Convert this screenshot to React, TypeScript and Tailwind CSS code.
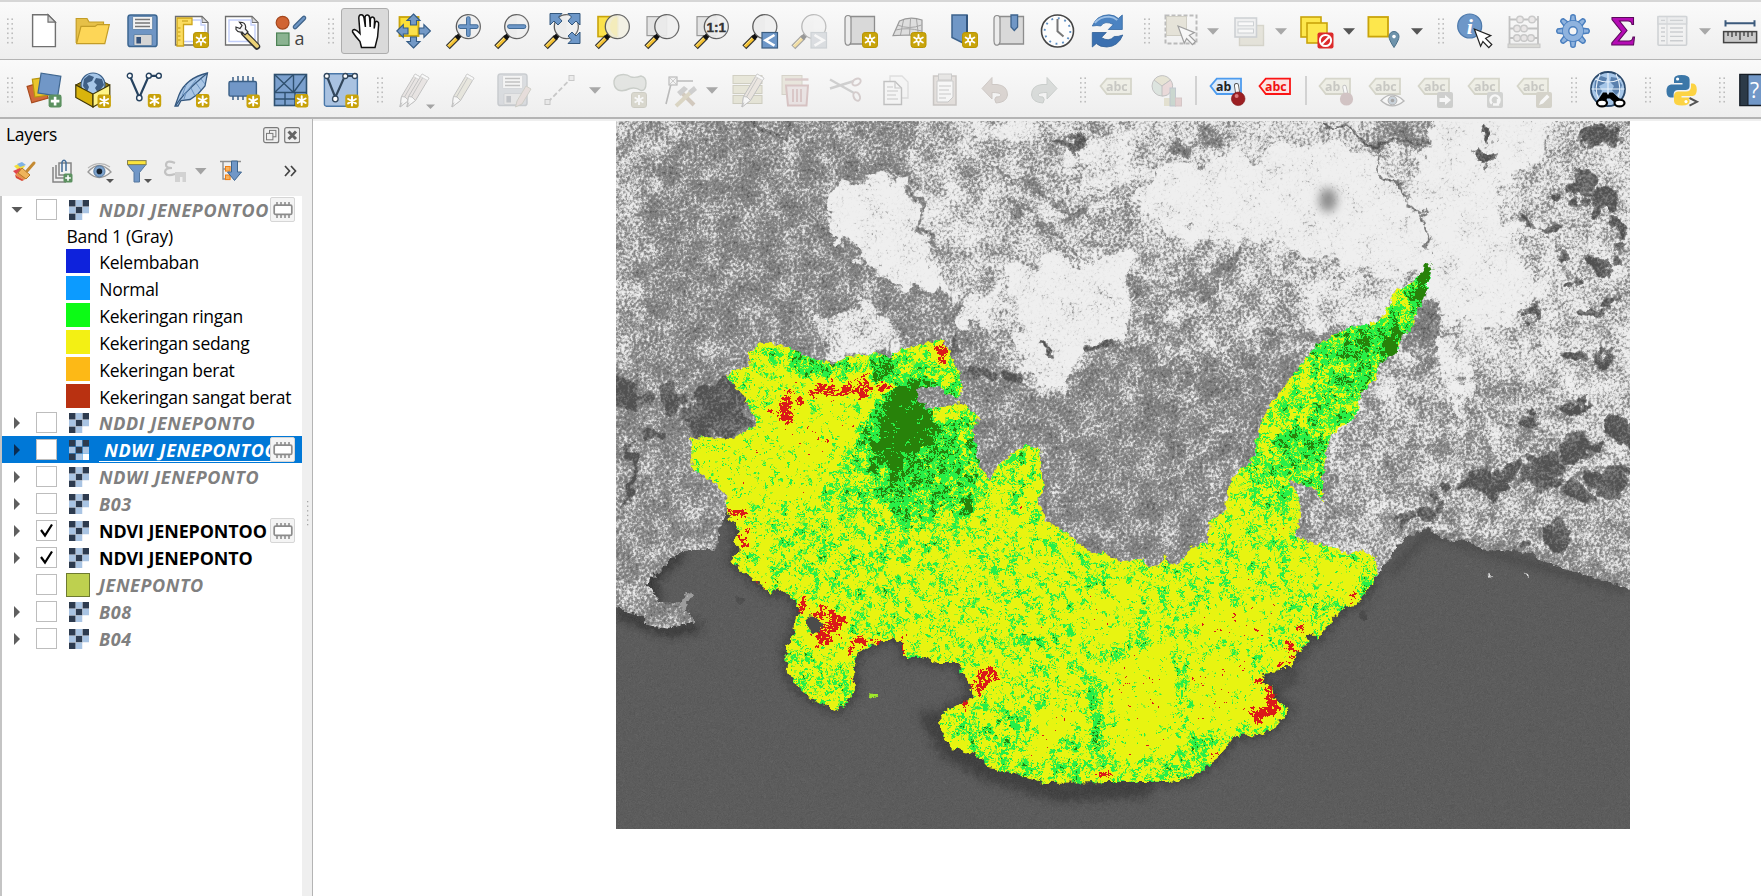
import React from "react";

type Kids = { children?: React.ReactNode };

/* ---------- toolbar primitives ---------- */

function Icon({ children, faded = false }: Kids & { faded?: boolean }) {
  return (
    <div className="flex w-[49.4px] flex-none items-center justify-center">
      <svg
        width="36"
        height="36"
        viewBox="0 0 36 36"
        fill="none"
        className={faded ? "flex-none overflow-visible opacity-40" : "flex-none overflow-visible"}
      >
        {children}
      </svg>
    </div>
  );
}

function Handle({ className = "w-[24.4px]" }: { className?: string }) {
  return (
    <div className={"flex flex-none items-center justify-end pr-[5px] " + className}>
      <svg width="7" height="26" viewBox="0 0 7 26">
        {[0, 1, 2, 3, 4, 5].map((i) => (
          <g key={i} fill="#bcbcbc">
            <rect x="0" y={i * 4.7 + 0.4} width="1.6" height="1.6" />
            <rect x="4.4" y={i * 4.7 + 0.4} width="1.6" height="1.6" />
          </g>
        ))}
      </svg>
    </div>
  );
}

function Arrow({ dark = false }: { dark?: boolean }) {
  return (
    <div className="flex w-[18.6px] flex-none items-center justify-center pr-[3px]">
      <svg width="12" height="7" viewBox="0 0 12 7">
        <path d="M0 .3H12L6 6.7Z" fill={dark ? "#555" : "#a8a8a8"} />
      </svg>
    </div>
  );
}

function Sep() {
  return (
    <div className="flex w-[11px] flex-none items-center justify-center">
      <div className="h-[29px] w-[2px] bg-[#d2d2d2]" />
    </div>
  );
}

function Badge({ x = 19, y = 19 }: { x?: number; y?: number }) {
  return (
    <g transform={`translate(${x} ${y})`}>
      <rect x=".5" y=".5" width="15" height="15" rx="2.6" fill="#c9a40a" stroke="#b89504" />
      <g stroke="#fff" strokeWidth="1.8" strokeLinecap="round">
        <path d="M8 3V13M3.6 5.5L12.4 10.5M12.4 5.5L3.6 10.5" />
      </g>
      <circle cx="8" cy="8" r="2.7" fill="#fff" />
      <circle cx="8" cy="8" r="1.2" fill="#c9a40a" />
    </g>
  );
}

function Flake({ x = 22, y = 22 }: { x?: number; y?: number }) {
  return (
    <g transform={`translate(${x} ${y})`}>
      <rect width="13.4" height="13.4" rx="2.4" fill="#c8a20a" />
      <path d="M6.7 2.3V11.1M2.8 4.5L10.6 8.9M10.6 4.5L2.8 8.9" stroke="#fff" strokeWidth="2" strokeLinecap="round" />
    </g>
  );
}

function Mag({ dx = 0, lens = "#ebebeb" }: { dx?: number; lens?: string }) {
  return (
    <g transform={`translate(${dx} 0)`}>
      <path d="M1.8 34.2L12 24" stroke="#333" strokeWidth="5.6" />
      <path d="M2.4 33.6L10.5 25.5" stroke="#f5c231" strokeWidth="3.2" />
      <path d="M1.8 32.8L10 24.6" stroke="#fbe28a" strokeWidth="1" />
      <path d="M10.6 25.4L14.4 21.6" stroke="#111" strokeWidth="4.8" />
      <circle cx="22.3" cy="13.6" r="12" fill={lens} fillOpacity=".93" stroke="#5c5c5c" strokeWidth="1.3" />
      <path d="M22.3 1.6A12 12 0 0 1 22.3 25.6" fill="#fff" opacity=".22" />
    </g>
  );
}

function Page() {
  return (
    <g>
      <path d="M1.5 3.5H28L34 9.5V32H1.5Z" fill="#fff" stroke="#6e6e6e" strokeWidth="1.3" />
      <path d="M28 3.5V9.5H34Z" fill="#d9d9d9" stroke="#6e6e6e" />
      <path d="M5 7H27V12H31V28.5H5Z" stroke="#c3cffa" strokeWidth="1.4" />
    </g>
  );
}

function Cursor({ x, y }: { x: number; y: number }) {
  return (
    <path
      transform={`translate(${x} ${y})`}
      d="M0 0L16.5 6.6L11.3 9.3L17.5 15.5L14.5 18.6L8.6 12.5L6.3 17.3Z"
      fill="#fff"
      stroke="#222"
      strokeWidth="1.2"
    />
  );
}

function Tag({ text = "abc", fill = "#e4e4cf", stroke = "#a8a88c", ink = "#86867a" }: { text?: string; fill?: string; stroke?: string; ink?: string }) {
  return (
    <g transform="translate(-1 0)">
      <path d="M2.5 14L8.8 6.6H33V22H8.8Z" fill={fill} stroke={stroke} strokeWidth="1.8" />
      <text x="8" y="18.6" fontSize="12.4" fontWeight="700" fill={ink} fontFamily="'Open Sans','Noto Sans',sans-serif">
        {text}
      </text>
    </g>
  );
}

function Floppy({ body = "#6f95c4", edge = "#3c6690", slot = "#35527a" }: { body?: string; edge?: string; slot?: string }) {
  return (
    <g>
      <rect x="3" y="2" width="29" height="31.5" rx="2.6" fill={body} stroke={edge} strokeWidth="1.5" />
      <rect x="7.6" y="3.5" width="20" height="13" rx="1" fill="#f3f3f3" stroke={edge} strokeWidth=".6" />
      <path d="M10 6.5H25M10 10H25M10 13.5H25" stroke="#777" strokeWidth="1.4" />
      <rect x="9" y="21.5" width="18" height="11" rx="1" fill="#d5d5d5" stroke={edge} strokeWidth=".6" />
      <rect x="11.4" y="24" width="4.6" height="6.5" fill={slot} />
    </g>
  );
}

function Pencil({ x = 0, fill = "#d5d2bd" }: { x?: number; fill?: string }) {
  return (
    <g transform={`translate(${x} 0)`}>
      <path d="M6 35L7.5 24.5L21 2L28 6L14.5 28.5Z" fill={fill} stroke="#777" strokeWidth="1" />
      <path d="M7.5 24.5L11 25L14.5 28.5L6 35Z" fill="#fff" stroke="#777" strokeWidth=".9" />
      <path d="M10.5 25L23 3.5M6 35L8 30.5" stroke="#777" strokeWidth=".9" />
      <path d="M19.5 4.5L26.5 8.5L28 6L21 2Z" fill="#fff" stroke="#999" strokeWidth=".8" />
    </g>
  );
}

function Scroll() {
  return (
    <g>
      <path d="M7 3.5H32.5V31H7Z" fill="#d9d9d9" stroke="#8d8d8d" strokeWidth="1.3" />
      <path d="M9 3V29Q8 33 4.5 32Q3 31 3 28V6Q3 2.5 6 2.5Q9 2.5 9 6" fill="#ececec" stroke="#8d8d8d" strokeWidth="1.2" />
    </g>
  );
}

/* ---------- toolbars ---------- */

function MainBar() {
  return (
    <div className="flex h-[57px] flex-none overflow-hidden border-b border-[#b4b4b4] bg-linear-to-b from-[#fafafa] to-[#eeeeee]">
      <Handle className="w-[19.3px]" />
      <Icon>
        <path d="M6.6 1.8H22L29.4 9.2V33.6H6.6Z" fill="#fff" stroke="#707070" strokeWidth="1.4" />
        <path d="M22 1.8V9.2H29.4Z" fill="#d4d4d4" stroke="#707070" strokeWidth="1.2" />
      </Icon>
      <Icon>
        <path d="M1.2 5.5H12L14 9H28.5V14H6.5L2.5 29.5H1.2Z" fill="#e6c048" stroke="#c39d27" strokeWidth="1.2" />
        <path d="M6 13.4H20L22.5 11.6H34.3L29.8 30.6H1.6Z" fill="#fdd657" stroke="#c39d27" strokeWidth="1.2" />
      </Icon>
      <Icon>
        <Floppy />
      </Icon>
      <Icon>
        <Page />
        <path d="M3 5H18V11.5H9.5V33H3Z" fill="#fbdc5f" stroke="#cda51a" strokeWidth="1.3" />
        <path d="M4 15H6.5M4 19H6.5M4 23H6.5M4 27H6.5M8 8H14" stroke="#c49a10" strokeWidth="1.2" />
        <Badge />
      </Icon>
      <Icon>
        <Page />
        <path d="M20 20L33 33.5" stroke="#333" strokeWidth="6.4" strokeLinecap="round" />
        <path d="M21 21L33 33" stroke="#ecd277" strokeWidth="3.8" strokeLinecap="round" />
        <path
          d="M12 16.5Q14 20 18 19L21 22L24 19L21.4 16Q22.5 11 18.5 9.5L15.5 9.2L18 12.5L16 15.5L12 14Z"
          fill="#f5f5f5"
          stroke="#333"
          strokeWidth="1.2"
        />
      </Icon>
      <Icon>
        <circle cx="9.6" cy="9.7" r="6.4" fill="#d06433" stroke="#a5471d" strokeWidth="1.2" />
        <path d="M22 14L31 5" stroke="#3f6389" strokeWidth="4.6" strokeLinecap="round" />
        <path d="M22 14L31 5" stroke="#6d95c4" strokeWidth="2.4" strokeLinecap="round" />
        <rect x="3.6" y="20" width="12.4" height="12.4" fill="#8bb391" stroke="#4d8255" strokeWidth="1.2" />
        <text x="21.5" y="31.5" fontSize="18" fill="#444" fontFamily="'Open Sans','Noto Sans',sans-serif">a</text>
      </Icon>
      <Handle className="w-[24.6px]" />
      <div className="flex w-[49.4px] flex-none items-center justify-center">
        <div className="flex h-[46px] w-[48px] items-center justify-center rounded-[3px] border border-[#adadad] bg-[#dadada]">
          <svg width="36" height="36" viewBox="0 0 36 36">
            <path
              d="M14.5 34.5L13 28.5Q8 23 5.6 19Q5 16.6 7.6 16.4Q10 17 13 20.5L11.8 5Q12 1.6 14 1.8Q16.6 1.6 17 5L18.4 14L18 4Q18.6 1.6 20.6 2Q22.6 2.4 22.6 5L23.2 14L23.4 6Q24 3.6 25.6 4Q27.6 4.4 27.6 7L27.2 15.5L28.2 9.5Q29 7.8 30.6 8.6Q32 9.4 31.6 12L30.6 24L28 34.5Z"
              fill="#fff"
              stroke="#111"
              strokeWidth="1.5"
            />
          </svg>
        </div>
      </div>
      <Icon>
        <rect x="3.5" y="4" width="19" height="19" fill="#fbdf36" stroke="#c9a40a" strokeWidth="1.8" />
        <g fill="#7399c6" stroke="#355c86" strokeWidth="1.1">
          <path d="M17.5 1L24 7.5H20.5V12H14.5V7.5H11Z" />
          <path d="M17.5 35L24 28.5H20.5V24H14.5V28.5H11Z" />
          <path d="M.8 18L7.3 11.5V15H12V21H7.3V24.5Z" />
          <path d="M34.4 18L27.9 11.5V15H23.2V21H27.9V24.5Z" />
        </g>
        <rect x="14" y="14.5" width="7" height="7" fill="#fbe04c" />
      </Icon>
      <Icon>
        <Mag />
        <path d="M22.3 5.5V21.7M14.2 13.6H30.4" stroke="#3f6a97" strokeWidth="4.6" strokeLinecap="round" />
        <path d="M22.3 5.5V21.7M14.2 13.6H30.4" stroke="#6d97c8" strokeWidth="2.8" strokeLinecap="round" />
      </Icon>
      <Icon>
        <g transform="translate(-.6 0)">
          <Mag />
          <path d="M15 13.6H29.6" stroke="#3f6a97" strokeWidth="4.6" strokeLinecap="round" />
          <path d="M15 13.6H29.6" stroke="#6d97c8" strokeWidth="2.8" strokeLinecap="round" />
        </g>
      </Icon>
      <Icon>
        <Mag />
        <g fill="#6d97c8" stroke="#34587e" strokeWidth="1">
          <path d="M6 .5H18L14.5 4L18 8L14 12L10 8L6 12Z" />
          <path d="M36 .5H24L27.5 4L24 8L28 12L32 8L36 12Z" />
          <path d="M36 30.5H24L27.5 27L24 23L28 19L32 23L36 19Z" />
        </g>
      </Icon>
      <Icon>
        <rect x="4" y="3.6" width="20" height="20" fill="#fbe24b" stroke="#c9a40a" strokeWidth="1.6" />
        <Mag dx={1} lens="#efeddc" />
        <path d="M23.3 4A10 10 0 0 0 23.3 23.3Z" fill="#f7ecac" opacity=".6" />
      </Icon>
      <Icon>
        <rect x="4" y="3.6" width="20" height="19" fill="#e3e3e3" stroke="#999" strokeWidth="1.2" />
        <Mag dx={1.5} />
      </Icon>
      <Icon>
        <rect x="4" y="3.6" width="20" height="19" fill="#e3e3e3" stroke="#999" strokeWidth="1.2" />
        <Mag dx={1} />
        <text x="23.3" y="18.6" textAnchor="middle" fontSize="13.5" fontWeight="700" fill="#333" stroke="#333" strokeWidth=".4" fontFamily="'Liberation Sans',sans-serif">1:1</text>
      </Icon>
      <Icon>
        <Mag dx={0.5} />
        <rect x="20" y="19.5" width="15.5" height="15.5" fill="#6d97c8" stroke="#3b5d80" strokeWidth="1.2" />
        <path d="M32.5 22L23.5 27.3L32.5 32.6" stroke="#fff" strokeWidth="2.6" />
      </Icon>
      <Icon faded>
        <Mag dx={0.5} />
        <rect x="20" y="19.5" width="15.5" height="15.5" fill="#b9c0c8" stroke="#98a2ab" strokeWidth="1.2" />
        <path d="M23.5 22L32.5 27.3L23.5 32.6" stroke="#fff" strokeWidth="2.6" />
      </Icon>
      <Icon>
        <g transform="translate(1 0)">
          <Scroll />
          <Badge x={20} />
        </g>
      </Icon>
      <Icon>
        <g transform="translate(1.5 0)">
          <path d="M8 8Q18 3 30.5 7V24L18 22L1.5 22.5Z" fill="#dedede" stroke="#999" strokeWidth="1.2" />
          <path d="M12 7L9 22M19 6L18 22M25 6L27 23M6 12Q18 17 30 12M4 17Q16 14 30 18" stroke="#a5a5a5" />
          <Badge />
        </g>
      </Icon>
      <Icon>
        <path d="M12 2H27V29.5H22L12 24.5Z" fill="#7097c6" stroke="#3d638d" strokeWidth="1.5" />
        <path d="M27 2V29.5" stroke="#32557e" strokeWidth="2" />
        <Badge x={22} />
      </Icon>
      <Icon>
        <g transform="translate(2 0)">
          <Scroll />
          <path d="M20 2H26.6V14L23.3 17.5L20 14Z" fill="#7097c6" stroke="#3d638d" strokeWidth="1.3" />
        </g>
      </Icon>
      <Icon>
        <circle cx="19.5" cy="18" r="16" fill="#fdfdfd" stroke="#454545" strokeWidth="1.6" />
        <circle cx="19.5" cy="18" r="12.8" stroke="#5f8fc2" strokeWidth="1.9" strokeDasharray="1.9 4.8" />
        <path d="M19.5 6V18.3L25.5 23.5" stroke="#777" strokeWidth="2" />
      </Icon>
      <Icon>
        <g transform="translate(.8 0)">
          <path d="M3.5 13Q8 2 20 1.8Q26 2 29.5 5.5L33.5 2V16.5H19.5L24.5 11.5Q16 7 12 13Q8.5 12 3.5 13Z" fill="#4b83c2" stroke="#356aa5" strokeWidth=".8" />
          <path d="M34 22Q29.5 33.5 18 34Q11 34 7.5 30.5L3.5 34V19.5H17.5L12.6 24.5Q20 29.5 25.5 23.5Q29 24 34 22Z" fill="#3b70b0" stroke="#2f5e96" strokeWidth=".8" />
          <path d="M6 10Q11 3.6 20 3.6Q25 4 28.5 7" stroke="#9dc0e6" strokeWidth="1.8" />
        </g>
      </Icon>
      <Handle className="w-[25.6px]" />
      <Icon faded>
        <rect x="2.5" y="2.5" width="31" height="28" stroke="#666" strokeWidth="2" strokeDasharray="4 2" />
        <rect x="3.5" y="3.5" width="20" height="19" fill="#cfc9b0" stroke="#9b967d" />
        <Cursor x={15} y={13} />
      </Icon>
      <Arrow />
      <Icon faded>
        <rect x="8.5" y="12.5" width="24" height="20" fill="#d0ccb6" stroke="#aaa78f" strokeWidth="1.4" />
        <rect x="4" y="5" width="21.5" height="19" fill="#e5e7e8" stroke="#949ca3" strokeWidth="1.6" />
        <rect x="7" y="8.8" width="15.5" height="4" fill="#fff" stroke="#949ca3" />
        <rect x="7" y="16" width="15.5" height="4" fill="#fff" stroke="#949ca3" />
      </Icon>
      <Arrow />
      <Icon>
        <rect x="2" y="4" width="20" height="20" fill="#fde74c" stroke="#c9a40a" strokeWidth="1.6" />
        <rect x="8" y="10" width="20" height="20" fill="#fde74c" stroke="#c9a40a" strokeWidth="1.6" />
        <rect x="18.5" y="19.5" width="16" height="16" rx="2" fill="#dc2a2a" />
        <circle cx="26.5" cy="27.5" r="5.6" stroke="#fff" strokeWidth="2" />
        <path d="M22.7 31.3L30.3 23.7" stroke="#fff" strokeWidth="2" />
      </Icon>
      <Arrow dark />
      <Icon>
        <rect x="1.4" y="4" width="19.6" height="19.6" fill="#fde74c" stroke="#c9a40a" strokeWidth="1.8" />
        <path d="M27 34.5Q22 27 22 23.5A5 5 0 0 1 32 23.5Q32 27 27 34.5Z" fill="#6e93ab" stroke="#4a7089" />
        <circle cx="27" cy="23.6" r="1.8" fill="#fff" />
      </Icon>
      <Arrow dark />
      <Handle className="w-[22px]" />
      <Icon>
        <circle cx="12.7" cy="13" r="12" fill="#6d97c8" stroke="#4d79ab" strokeWidth="1.2" />
        <text x="12.9" y="20.5" textAnchor="middle" fontSize="22" fontWeight="700" fontStyle="italic" fill="#fff" fontFamily="'Liberation Serif',serif">i</text>
        <Cursor x={17.3} y={16} />
      </Icon>
      <Icon faded>
        <path d="M3.5 3V31M32 3V31M3.5 6.5H32M3.5 15.5H32M3.5 25H32" stroke="#777" strokeWidth="1.8" />
        <rect x="2" y="31" width="32" height="3.6" fill="#b9b9b0" stroke="#888" />
        <g fill="#d9d2d2" stroke="#888" strokeWidth="1.4">
          <circle cx="14" cy="6.5" r="3.3" /><circle cx="26" cy="6.5" r="3.3" />
          <circle cx="11" cy="15.5" r="3.3" /><circle cx="18" cy="15.5" r="3.3" />
          <circle cx="11" cy="25" r="3.3" /><circle cx="18" cy="25" r="3.3" /><circle cx="25" cy="25" r="3.3" />
        </g>
      </Icon>
      <Icon>
        <g fill="#8fb3de" stroke="#4a7fbf" strokeWidth="1.4">
          {[0, 45, 90, 135, 180, 225, 270, 315].map((a) => (
            <path key={a} d="M15.2 8.5L16 2.6Q18 .8 20 2.6L20.8 8.5" transform={`rotate(${a} 18 18)`} />
          ))}
          <circle cx="18" cy="18" r="10.2" />
          <circle cx="18" cy="18" r="4.2" fill="#f5f5f5" />
        </g>
        <circle cx="18" cy="18" r="9.4" stroke="#8fb3de" strokeWidth="1.6" />
      </Icon>
      <Icon>
        <path
          d="M7 4.5H28.5V11.5H27Q26.5 8 23 8H14.5L22 17.5L13.5 28H24Q27.5 28 28 24H29.5L28.5 32H6.8V30L16.5 18.5L7 6.5Z"
          fill="#b50cb5"
          stroke="#5b0a5b"
          strokeWidth="1.1"
        />
      </Icon>
      <Icon faded>
        <rect x="4" y="3.6" width="28.6" height="28.6" rx="1" fill="#f0f0f0" stroke="#9ba2a8" strokeWidth="1.6" />
        <rect x="4" y="3.6" width="28.6" height="7.4" fill="#dcdfe2" stroke="#9ba2a8" strokeWidth="1.4" />
        <path d="M13 4V32" stroke="#a9afb5" strokeWidth="1.2" />
        <path d="M7 7.4H11M16 7.4H29M7 15H11M16 15H29M7 19H11M16 19H29M7 23.4H11M16 23.4H29M7 27.8H11M16 27.8H29" stroke="#92989e" strokeWidth="1.4" />
      </Icon>
      <Arrow />
      <Icon>
        <path d="M3.5 10.3H32.5M3.5 7.2V13.4M32.5 7.2V13.4" stroke="#3c5a7c" strokeWidth="2" />
        <rect x="1.6" y="18.6" width="33" height="11" fill="#c9c9c9" stroke="#444" strokeWidth="1.5" />
        <path d="M6 19V23M10 19V24M14 19V23M18 19V27M22 19V23M26 19V24M30 19V23" stroke="#444" strokeWidth="1.4" />
      </Icon>
    </div>
  );
}

function Globe({ cx, cy, r }: { cx: number; cy: number; r: number }) {
  return (
    <g transform={`translate(${cx} ${cy}) scale(${r / 12})`}>
      <circle r="12" fill="#a6c6e8" stroke="#3a5f88" strokeWidth="1.2" />
      <path d="M-9 -6L-4 -10L1 -8L-1 -4L-6 -2L-4 2L-6 7L-10 1ZM3 -7L9 -6L11 0L8 4L5 8L2 3L4 0L1 -3Z" fill="#3f5f85" />
    </g>
  );
}

function EditBar() {
  return (
    <div className="flex h-[59px] flex-none overflow-hidden border-b-2 border-[#b4b4b4] bg-linear-to-b from-[#fafafa] to-[#eeeeee] pt-[3px]">
      <Handle className="w-[19.3px]" />
      <Icon>
        <g strokeWidth="1.2">
          <rect x="3" y="12" width="17" height="17" fill="#d2693b" stroke="#a84b1e" transform="rotate(-16 11 20)" />
          <rect x="7.5" y="6" width="18" height="18" fill="#eac52c" stroke="#b8950e" transform="rotate(-8 16 15)" />
          <rect x="13.5" y="2.5" width="20" height="20" fill="#7197c7" stroke="#3f668f" transform="rotate(9 23 12)" />
        </g>
        <rect x="22.6" y="22.6" width="13" height="13" rx="2.4" fill="#5c9160" />
        <path d="M29.1 24.8V33.4M24.8 29.1H33.4" stroke="#fff" strokeWidth="2.6" />
      </Icon>
      <Icon>
        <path d="M.8 13L17.5 4L34.8 13L18 22Z" fill="#96790a" stroke="#3f3606" />
        <Globe cx={18} cy={13} r={12} />
        <path d="M.8 13L18 22V35L.8 25.5Z" fill="#d9b40c" stroke="#3f3606" strokeWidth="1.2" />
        <path d="M34.8 13L18 22V35L34.8 25.5Z" fill="#fdf388" stroke="#3f3606" strokeWidth="1.2" />
        <Flake x={22.5} y={22.5} />
      </Icon>
      <Icon>
        <g transform="translate(.8 0)">
          <path d="M4 3.8L13.500 25.500L23 3.800H33" stroke="#26425f" strokeWidth="2.200" />
          <g fill="#fff" stroke="#26425f" strokeWidth="1.4">
            <circle cx="4" cy="3.8" r="2.500" /><circle cx="23" cy="3.8" r="2.500" /><circle cx="33" cy="3.8" r="2.500" /><circle cx="13.5" cy="26" r="2.700" />
          </g>
          <Flake />
        </g>
      </Icon>
      <Icon>
        <path d="M33.5 1L31 14L24 22L16 27.5L7 28.5L4 34H1L5 23Q12 6 33.5 1Z" fill="#a9c6e6" stroke="#35587f" strokeWidth="1.3" />
        <path d="M1.5 34Q10 20 33.5 1" stroke="#35587f" strokeWidth="1.3" />
        <path d="M12 21L10 27M17 16L21 24M22 11L27 18M27 7L31 12M10 23L22 8M8 24L12 13" stroke="#6b93c0" />
        <Flake x={22} y={22} />
      </Icon>
      <Icon>
        <path d="M9 5V28M14 4V28M19 4V28M24 4V28M29 5V28" stroke="#3b5f86" strokeWidth="1.5" />
        <rect x="5" y="9.5" width="27.4" height="14.6" rx="1.4" fill="#7197c7" stroke="#3b5f86" strokeWidth="1.4" />
        <Flake x={22.5} y={22.5} />
      </Icon>
      <Icon>
        <rect x="1.5" y="2.5" width="32" height="31" fill="#7ba0ce" stroke="#2f506f" strokeWidth="1.6" />
        <path d="M1.5 20.5H33.5M20.5 2.5V20.5M1.5 2.5L20.5 20.5M20.5 2.5L1.5 20.5M20.5 20.5L33.5 2.5M12 20.5V33.5M1.5 27H22M22 20.5V33.5" stroke="#2f506f" strokeWidth="1.4" />
        <Flake x={22} y={22} />
      </Icon>
      <Icon>
        <g transform="translate(.8 0)">
          <rect x="1.6" y="1.8" width="33" height="32.4" rx="2" fill="#a9c2e1" stroke="#4a77a8" strokeWidth="1.4" />
          <path d="M4 4L12.5 25.5L22 4H32" stroke="#33475c" strokeWidth="2.2" />
          <g fill="#fff" stroke="#33475c" strokeWidth="1.3">
            <circle cx="4" cy="4" r="2.5" /><circle cx="22.5" cy="4" r="2.5" /><circle cx="32" cy="4" r="2.5" /><circle cx="12.5" cy="27" r="2.8" />
          </g>
          <Flake x={22.5} y={22.5} />
        </g>
      </Icon>
      <Handle className="w-[24.4px]" />
      <Icon faded>
        <Pencil x={-2} fill="#d7cdc9" />
        <Pencil x={5} fill="#d7cdc9" />
        <path d="M30 32.5H39L34.5 37Z" fill="#333" />
      </Icon>
      <Icon faded>
        <Pencil x={0} />
      </Icon>
      <Icon faded>
        <Floppy body="#b4bac2" edge="#8b929b" slot="#7b828c" />
        <path d="M20.5 35L22 29L31 14L36 17L27 32Z" fill="#d5beb8" stroke="#998" />
      </Icon>
      <Icon faded>
        <path d="M4 30L28 5.5" stroke="#888" strokeWidth="1.8" strokeDasharray="5 2.6" />
        <rect x="1" y="27.5" width="5" height="5" fill="#ddd" stroke="#888" />
        <rect x="25" y="3.5" width="5" height="5" fill="#ddd" stroke="#888" />
      </Icon>
      <Arrow />
      <Icon faded>
        <path d="M8 3Q14 1.5 19 5Q24 6 29 4Q34 5 34 11Q34 19 29 18.5Q24 15 18 16.5Q11 20 6 18Q1.5 15 2 9Q3 4 8 3Z" fill="#c9cdc6" stroke="#8b9489" strokeWidth="1.4" />
        <rect x="19.5" y="20.5" width="15" height="15" rx="2.4" fill="#b5b199" stroke="#999680" />
        <path d="M27 23V33M22.6 25.5L31.4 30.5M31.4 25.5L22.6 30.5" stroke="#fff" strokeWidth="1.9" />
      </Icon>
      <Icon faded>
        <path d="M9 12L4 32M10 9H31" stroke="#666" strokeWidth="1.6" />
        <rect x="7" y="5" width="8" height="8" fill="#eee" stroke="#666" strokeWidth="1.2" />
        <path d="M7 5L15 13M15 5L7 13" stroke="#777" strokeWidth=".8" />
        <path d="M18 19L32 33" stroke="#a48f74" strokeWidth="4" />
        <path d="M15 20L22 14L26 17L18.5 24ZM32 14L35 18L29 23L26 19Z" fill="#999" />
        <path d="M14 34L28 21" stroke="#b9ac81" strokeWidth="4" />
      </Icon>
      <Arrow />
      <Icon faded>
        <g fill="#d3d0ae" stroke="#999676">
          <rect x="3" y="3.5" width="29" height="8" /><rect x="3" y="13.5" width="29" height="8" /><rect x="3" y="23.5" width="29" height="8" />
        </g>
        <Pencil x={6} fill="#dccfc2" />
      </Icon>
      <Icon faded>
        <rect x="3" y="3.5" width="20" height="19" fill="#d5cfb8" stroke="#a5a088" />
        <path d="M6 7.5H29.5" stroke="#b58c8c" strokeWidth="2.4" />
        <path d="M7 13.5H29L27.5 33.5H9Z" fill="#dccdcd" stroke="#b08080" strokeWidth="2" />
        <path d="M14 17V30M18 17V30M22 17V30" stroke="#b08080" strokeWidth="1.8" />
      </Icon>
      <Icon faded>
        <path d="M2 7.5L26 21M2 16.5L26 9" stroke="#999" strokeWidth="2.4" />
        <ellipse cx="28.5" cy="10" rx="4.5" ry="3" stroke="#a89494" strokeWidth="2" transform="rotate(-30 28.5 10)" />
        <ellipse cx="28.5" cy="24.5" rx="3" ry="4.5" stroke="#a89494" strokeWidth="2" transform="rotate(-25 28.5 24)" />
      </Icon>
      <Icon faded>
        <path d="M12 4H24L30 10V26H12Z" fill="#f4f4f4" stroke="#bbb" strokeWidth="1.3" />
        <path d="M6 9.5H17L23.5 16V32.5H6Z" fill="#f7f7f7" stroke="#777" strokeWidth="1.4" />
        <path d="M17 9.5V16H23.5M9 15H15M9 19H20M9 23H18M9 27H20" stroke="#8a8a8a" strokeWidth="1.2" />
      </Icon>
      <Icon faded>
        <rect x="6.5" y="4" width="22.5" height="29" fill="#cdc3bc" stroke="#8d857f" strokeWidth="1.5" />
        <path d="M10 9H26V25L21 30H10Z" fill="#fafafa" stroke="#8d8d8d" />
        <rect x="11.5" y="2" width="13" height="6" fill="#d0cdca" stroke="#8d8d8d" />
        <path d="M12 14H24M12 18H22M12 22H24M12 26H19" stroke="#8a8a8a" strokeWidth="1.2" />
      </Icon>
      <Icon faded>
        <path d="M5 16.5L15 5.5V12.5H20Q30.5 13.5 30.5 23Q29.5 30.5 19 31Q16.5 27 19 25Q24 25 23.6 22.5Q23 20.5 15 20.5V27Z" fill="#b5a79f" stroke="#94877f" />
      </Icon>
      <Icon faded>
        <path d="M31 16.5L21 5.5V12.5H16Q5.5 13.5 5.5 23Q6.5 30.5 17 31Q19.5 27 17 25Q12 25 12.4 22.5Q13 20.5 21 20.5V27Z" fill="#b1b8b4" stroke="#8c9590" />
      </Icon>
      <Handle className="w-[23.4px]" />
      <Icon faded>
        <Tag />
      </Icon>
      <Icon faded>
        <circle cx="14" cy="14" r="10" fill="#bacdc0" stroke="#777" />
        <path d="M14 14L6 8A10 10 0 0 1 22.5 8Z" fill="#d0caa4" stroke="#777" />
        <path d="M14 14L22.5 8A10 10 0 0 1 14 24Z" fill="#dbb3b3" stroke="#777" />
        <rect x="16" y="26" width="6" height="8" fill="#cfc9a0" /><rect x="22" y="16" width="5.5" height="18" fill="#8fae9c" stroke="#789" />
        <rect x="27.5" y="26" width="6" height="8" fill="#cfa0a0" stroke="#a88" />
      </Icon>
      <Sep />
      <Icon>
        <Tag text="ab" fill="#dbeafa" stroke="#4d9bee" ink="#222" />
        <path d="M27.5 13.5L29 24" stroke="#555" strokeWidth="5" strokeLinecap="round" />
        <path d="M27.5 13.5L29 24" stroke="#fafafa" strokeWidth="3.2" strokeLinecap="round" />
        <circle cx="29.2" cy="26.8" r="6.8" fill="#9c1f22" stroke="#7c1113" strokeWidth=".6" />
        <circle cx="27.6" cy="24" r="2" fill="#dc7c7c" />
      </Icon>
      <Icon>
        <Tag fill="#fbe3e3" stroke="#fb1414" ink="#f01010" />
      </Icon>
      <Sep />
      <Icon faded>
        <Tag text="ab" />
        <path d="M26.5 15L28.5 24" stroke="#777" strokeWidth="4.4" strokeLinecap="round" />
        <path d="M26.5 15L28.5 24" stroke="#fff" strokeWidth="2.6" strokeLinecap="round" />
        <circle cx="28.5" cy="27" r="6.6" fill="#a27f80" />
      </Icon>
      <Icon faded>
        <Tag />
        <path d="M13 28.5Q24 17 36 29Q24 39 13 28.5Z" fill="#fff" stroke="#666" strokeWidth="1.4" />
        <circle cx="24.5" cy="28.5" r="4.4" fill="#8fa3b5" stroke="#555" />
        <circle cx="24.5" cy="28.5" r="1.8" fill="#333" />
      </Icon>
      <Icon faded>
        <Tag />
        <rect x="20" y="20" width="16" height="16" rx="2" fill="#9a9c98" />
        <path d="M22.5 26H28V23L34 28L28 33V30H22.5Z" fill="#fff" />
      </Icon>
      <Icon faded>
        <Tag />
        <rect x="20" y="20" width="16" height="16" rx="2" fill="#a3a5a1" />
        <path d="M25 31.5A4.6 4.6 0 1 1 31 31.5M31 27V32.5H26" stroke="#fff" strokeWidth="2.4" />
      </Icon>
      <Icon faded>
        <Tag />
        <rect x="20" y="20" width="16" height="16" rx="2" fill="#a9a48f" />
        <path d="M23 33L24.5 29L31 22.5L33.5 25L27 31.5Z" fill="#fff" />
      </Icon>
      <Handle className="w-[24.4px]" />
      <Icon>
        <circle cx="18" cy="17" r="17" fill="#a6c6e8" stroke="#2c4a6c" strokeWidth="1.8" />
        <path d="M5 9L11 4L17 6L15 11L9 14L12 19L9 24L4 18ZM21 5L28 6L32 13L30 19L26 23L22 18L24 14L20 10Z" fill="#5a80ad" />
        <path d="M1.5 17H34.500M18 1V24M5 7Q18 13 31 7M10 2Q3 16 9 28M26 2Q33 16 27 28" stroke="#e8f1fa" strokeWidth="1.100" />
        <path d="M6 31L13 20.500H16.500L18 23L19.500 20.500H23L34 31L24 30L20 26.500H17L16 30Z" fill="#000" />
        <ellipse cx="12" cy="31" rx="5" ry="3.400" fill="#fff" stroke="#000" strokeWidth="2.200" />
        <ellipse cx="29.500" cy="31" rx="5" ry="3.400" fill="#fff" stroke="#000" strokeWidth="2.200" />
      </Icon>
      <Handle className="w-[24.6px]" />
      <Icon>
        <path d="M17.5 3Q9.5 3 10 8V11H18.5V12.5H7Q2.4 13 2.5 19.5Q2.6 25 6.5 25.5H9.6V22Q10 18 14 18H22Q25.6 17.6 25.6 14V7.5Q25.6 3 17.5 3Z" fill="#3b77a8" />
        <circle cx="13.6" cy="7" r="1.6" fill="#fff" />
        <path d="M18 33.5Q26 33.5 25.6 28.5V25.5H17.5V24H28.5Q32.8 23.6 32.8 17.5Q32.6 12 29 11.5H27V15Q26.6 19.6 22 19.6H14Q10 20 10 24V29Q10 33.5 18 33.5Z" fill="#fcd343" />
        <circle cx="22" cy="29.6" r="1.6" fill="#fff" />
        <path d="M25.5 26L33 29.8L25.5 33.6" stroke="#f5f5f5" strokeWidth="4" />
        <path d="M25.5 26L33 29.8L25.5 33.6" stroke="#555" strokeWidth="2" />
      </Icon>
      <Handle className="w-[24.4px]" />
      <Icon>
        <rect x="3" y="2.5" width="36" height="31" fill="#7197c7" stroke="#151d26" strokeWidth="1.5" />
        <rect x="3" y="2.5" width="8" height="31" fill="#2c3a48" stroke="#151d26" />
        <text x="13" y="26" fontSize="21" fill="#fff" fontFamily="'Open Sans',sans-serif">?</text>
      </Icon>
    </div>
  );
}

/* ---------- layers panel ---------- */

function Expander({ open = false, dark = false }: { open?: boolean; dark?: boolean }) {
  return (
    <svg width="12" height="12" viewBox="0 0 12 12" className="flex-none">
      {open ? <path d="M.5 3H11.5L6 8.8Z" fill="#5a5a5a" /> : <path d="M3 0V12L9 6Z" fill={dark ? "#0a2c52" : "#5f5f5f"} />}
    </svg>
  );
}

function RasterIcon() {
  const cells = ["#2d3b4f", "#a9c4e3", "#2d3b4f", "#a9c4e3", "#2d3b4f", "#a9c4e3", "#2d3b4f", "#a9c4e3", "#ffffff"];
  return (
    <svg width="20" height="20" viewBox="0 0 20 20" className="flex-none">
      {cells.map((c, i) => (
        <rect key={i} x={(i % 3) * 6.8} y={Math.floor(i / 3) * 6.8} width="6.6" height="6.6" fill={c} />
      ))}
    </svg>
  );
}

function Chip() {
  return (
    <div className="absolute top-[1px] left-[268px] flex h-[25px] w-[25px] items-center justify-center rounded-[2px] border border-[#d6d6d6] bg-[#f4f4f4]">
      <svg width="20" height="18" viewBox="0 0 20 18">
        <path d="M4 1V17M8 1V17M12 1V17M16 1V17" stroke="#777" strokeWidth="1.3" />
        <rect x="1.2" y="4.2" width="17.6" height="9.2" rx="1.4" fill="#fff" stroke="#8c8c8c" strokeWidth="1.7" />
      </svg>
    </div>
  );
}

type Layer = {
  name: string;
  style: "off" | "on" | "sel";
  chip?: boolean;
  open?: boolean;
  vector?: boolean;
};

function LayerRow({ name, style, chip, open, vector }: Layer) {
  const sel = style === "sel";
  const textClass =
    style === "on"
      ? "font-bold text-black text-[17.9px] tracking-[-0.1px]"
      : sel
        ? "font-bold italic text-white underline underline-offset-[4px] decoration-1 text-[18px] tracking-[0.6px]"
        : "font-bold italic text-[#808080] text-[18px] tracking-[0.6px]";
  return (
    <div className={"relative flex h-[27px] items-center overflow-hidden pl-[9px] " + (sel ? "bg-[#0078d7]" : "")}>
      <div className="w-[12px] flex-none">{!vector && <Expander open={open} dark={sel} />}</div>
      <div className="ml-[13px] flex h-[21px] w-[21px] flex-none items-center justify-center border-[1.5px] border-[#bdbdbd] bg-white">
        {style === "on" && (
          <svg width="15" height="15" viewBox="0 0 15 15">
            <path d="M2 7L6 12.5L13 1.5" fill="none" stroke="#000" strokeWidth="2.2" />
          </svg>
        )}
      </div>
      <div className={"flex w-[24px] flex-none justify-center " + (vector ? "ml-[9px]" : "ml-[9.5px]")}>
        {vector ? <div className="h-[24px] w-[24px] border border-[#6d7a30] bg-[#bed04f]" /> : <RasterIcon />}
      </div>
      <div className={"pt-[2px] leading-[25px] whitespace-pre " + (vector ? "ml-[9px] " : "ml-[8.5px] ") + textClass}>{name}</div>
      {chip && <Chip />}
    </div>
  );
}

function LegendRow({ color, label }: { color: string; label: string }) {
  return (
    <div className="flex h-[27px] items-center pt-px pl-[64px]">
      <div className={"h-[24px] w-[24px] flex-none " + color} />
      <div className="ml-[9.3px] pt-px text-[17.5px] leading-[26px] tracking-[-0.3px] whitespace-pre text-black">{label}</div>
    </div>
  );
}

function LayersPanel() {
  return (
    <div className="flex w-[313px] flex-none flex-col border-r border-[#b4b4b4] bg-[#efefef] font-['Open_Sans','Noto_Sans',sans-serif]">
      <div className="flex h-[32px] items-center pr-[12px] pl-[6px]">
        <div className="flex-1 pb-px text-[17.5px] tracking-[-0.3px] text-black">Layers</div>
        <svg width="38" height="17" viewBox="0 0 38 17" fill="none">
          <rect x="1.7" y=".7" width="15" height="15" rx="2" stroke="#7a7a7a" strokeWidth="1.2" />
          <rect x="7.5" y="3.4" width="6.4" height="6.4" stroke="#7a7a7a" />
          <rect x="4.5" y="6.4" width="6.4" height="6.4" fill="#efefef" stroke="#7a7a7a" />
          <rect x="22.7" y=".7" width="15" height="15" rx="2" stroke="#7a7a7a" strokeWidth="1.2" />
          <path d="M26.5 4.5L34 12M34 4.5L26.5 12" stroke="#666" strokeWidth="3" />
        </svg>
      </div>
      <div className="flex h-[45px] items-center pb-[6px] pl-[12px]">
        <svg width="290" height="26" viewBox="0 0 290 26" fill="none">
          <path d="M2 8L9 5L13 8L8 14Z" fill="#f2df3e" />
          <path d="M1 13L8 10L12 14L6 18Z" fill="#e0474e" />
          <path d="M5 6L10 4L14 7L8 9Z" fill="#7fb2e5" />
          <path d="M3 17L9 12L18 17L12 22Z" fill="#e98f4a" />
          <path d="M3 17L12 22L10 23L4 20Z" fill="#d94b33" />
          <path d="M10 10L18 17L14 21L6 15Z" fill="#efb45c" stroke="#b77b28" />
          <path d="M15 13L22 5" stroke="#c48a32" strokeWidth="3" strokeLinecap="round" />
          <g stroke="#858585" strokeWidth="1.5">
            <path d="M41 9V24H54M44 7V20H56" />
            <rect x="47" y="5" width="12" height="12" fill="#f3f3f3" />
          </g>
          <path d="M50 14V4Q52 .5 54 4V13" stroke="#436d99" strokeWidth="1.5" />
          <rect x="51.5" y="15.5" width="9" height="9" rx="1.6" fill="#5c9160" />
          <path d="M56 17.2V22.8M53.2 20H58.8" stroke="#fff" strokeWidth="1.6" />
          <path d="M76 14Q87 1 99 14Q87 25 76 14Z" fill="#f6f6f6" stroke="#999" strokeWidth="1.3" />
          <path d="M76 10Q87 2 98 9" stroke="#b5b5b5" strokeWidth="1.2" />
          <circle cx="87.4" cy="13.4" r="5.6" fill="#7da3cd" stroke="#54779e" />
          <circle cx="87.4" cy="13.4" r="2.8" fill="#17212c" />
          <path d="M94 21H102L98 25Z" fill="#555" />
          <path d="M115.5 6.5H134L127.5 14.5V24H122V14.5Z" fill="#7197c7" stroke="#54779e" />
          <rect x="115.5" y="2.6" width="18.6" height="4" fill="#fbe43c" stroke="#86814b" />
          <path d="M132 21H140L136 25Z" fill="#555" />
          <path d="M163 5Q154 1.5 154 7Q154 10 160 10Q153 10 153 14Q154 19 163 16" stroke="#c2c2c2" strokeWidth="2.2" />
          <path d="M163 14H174V24H170.5V19H168V24H163Z" fill="#d2d2d2" />
          <path d="M183 10H194.5L188.7 16.5Z" fill="#a3a3a3" />
          <path d="M208 3.5H229M211 4V21H216M211 11H216" stroke="#8f8f8f" strokeWidth="1.4" />
          <rect x="213.5" y="8.5" width="4.6" height="4.6" fill="#f8b25e" stroke="#f07d12" />
          <rect x="213.5" y="17" width="4.6" height="4.6" fill="#f8b25e" stroke="#f07d12" />
          <path d="M219.5 3H225.5V14H229.5L222.5 22.5L215.5 14H219.5Z" fill="#7197c7" stroke="#3f668f" />
          <path d="M273 8L277.5 13L273 18M279 8L283.5 13L279 18" stroke="#444" strokeWidth="1.7" />
        </svg>
      </div>
      <div className="flex min-h-0 flex-1">
        <div className="relative w-[302px] flex-none overflow-hidden border-l-2 border-[#c4c4c4] bg-white">
          <LayerRow name="NDDI JENEPONTOO" style="off" chip open />
          <div className="h-[24px] pl-[64.5px] text-[17.5px] leading-[26px] tracking-[-0.3px] text-black">Band 1 (Gray)</div>
          <LegendRow color="bg-[#0e22dc]" label="Kelembaban" />
          <LegendRow color="bg-[#0c9bff]" label="Normal" />
          <LegendRow color="bg-[#0cfb15]" label="Kekeringan ringan" />
          <LegendRow color="bg-[#f3f014]" label="Kekeringan sedang" />
          <LegendRow color="bg-[#fdb916]" label="Kekeringan berat" />
          <LegendRow color="bg-[#b93111]" label="Kekeringan sangat berat" />
          <LayerRow name="NDDI JENEPONTO" style="off" />
          <LayerRow name=" NDWI JENEPONTOO" style="sel" chip />
          <LayerRow name="NDWI JENEPONTO" style="off" />
          <LayerRow name="B03" style="off" />
          <LayerRow name="NDVI JENEPONTOO" style="on" chip />
          <LayerRow name="NDVI JENEPONTO" style="on" />
          <LayerRow name="JENEPONTO" style="off" vector />
          <LayerRow name="B08" style="off" />
          <LayerRow name="B04" style="off" />
        </div>
        <div className="flex flex-1 justify-center pt-[305px]">
          <svg width="3" height="26" viewBox="0 0 3 26">
            {[0, 1, 2, 3, 4, 5].map((i) => (
              <rect key={i} x="1" y={i * 4.6} width="1.3" height="1.3" fill="#a5a5a5" />
            ))}
          </svg>
        </div>
      </div>
    </div>
  );
}

/* ---------- raster map ---------- */

const gx = (x: number) => (x > 1110 ? 1110 + (x - 1110) * 1.0141 : x);
const geo = (s: string) =>
  s.replace(/(\d+(?:\.\d+)?)[ ,](\d+(?:\.\d+)?)/g, (_m, x, y) => `${gx(Number(x)).toFixed(1)} ${y}`);

function Poly({ p, fill, opacity }: { p: string; fill?: string; opacity?: number }) {
  return <polygon points={geo(p)} fill={fill} opacity={opacity} />;
}
function Line({ p, w, c }: { p: string; w?: number; c?: string }) {
  return <path d={geo(p)} strokeWidth={w} stroke={c} fill="none" />;
}
function Blob({ b, fill }: { b: number[]; fill?: string }) {
  return <ellipse cx={gx(b[0])} cy={b[1]} rx={b[2]} ry={b[3]} fill={fill} />;
}

/* Ridges that radiate down the slopes of the volcano. */
const rand = (n: number) => {
  const v = Math.sin(n * 127.1 + 11.7) * 43758.5453;
  return v - Math.floor(v);
};
const RIDGES = Array.from({ length: 420 }, (_, i) => {
  const a = ((-12 + rand(i) * 212) * Math.PI) / 180;
  const r0 = 70 + rand(i + 500) * 300;
  const len = 18 + rand(i + 900) * 46;
  const bend = 0.05 * (rand(i + 1300) - 0.5);
  const pt = (r: number, t: number) => `${(1420 + Math.cos(t) * r).toFixed(1)} ${(215 + Math.sin(t) * r * 0.85).toFixed(1)}`;
  return {
    d: `M${pt(r0, a)}L${pt(r0 + len / 2, a + bend)}L${pt(r0 + len, a)}`,
    w: 1.2 + rand(i + 1700) * 3,
    c: rand(i + 2100) > 0.45 ? "#fff" : "#333",
  };
});

const DISTRICT = geo(
  "762,342 778,344 793,350 803,355 832,364 848,356 875,354 889,357 900,350 940,340 948,348 954,362 960,375 963,388 959,398 947,394 938,386 917,388 917,401 931,409 963,403 980,418 972,428 977,452 981,470 990,479 995,468 1007,458 1023,445 1040,449 1041,475 1045,485 1038,500 1047,522 1073,537 1090,553 1102,552 1120,561 1142,560 1147,567 1160,565 1164,553 1167,563 1177,565 1190,547 1207,542 1210,520 1225,510 1225,492 1236,472 1253,458 1253,442 1260,418 1277,392 1290,375 1317,342 1347,327 1373,323 1382,312 1390,292 1408,283 1418,272 1423,261 1427,270 1423,288 1417,303 1410,315 1409,328 1398,335 1393,352 1377,362 1372,380 1358,392 1353,417 1328,435 1323,455 1320,474 1320,500 1310,488 1287,480 1298,503 1297,520 1292,537 1310,542 1333,548 1347,555 1360,549 1372,558 1373,567 1370,583 1353,605 1340,608 1327,623 1315,639 1310,633 1303,635 1305,643 1298,654 1292,653 1290,667 1278,667 1277,671 1260,673 1262,683 1270,687 1272,698 1287,709 1273,727 1257,735 1233,736 1217,758 1190,778 1170,782 1110,782 1043,783 1020,775 990,768 977,755 953,748 942,735 939,715 957,705 972,698 970,687 963,673 958,663 937,663 920,657 903,657 903,643 893,637 873,645 858,652 854,667 855,690 843,707 837,711 813,700 797,687 787,673 786,648 794,633 795,623 800,610 792,598 782,590 770,593 757,582 730,561 740,550 733,542 739,532 727,513 725,493 710,480 693,470 692,452 690,438 707,437 732,439 758,423 743,395 727,378 730,372 750,365 748,355",
);

const SEA = geo(
  "616,608 645,617 645,625 670,628 696,622 683,608 692,593 687,592 680,604 660,602 647,583 665,565 682,550 717,550 718,530 727,513 800,560 1000,640 1200,700 1300,600 1372,577 1387,557 1400,537 1423,528 1440,540 1463,542 1480,550 1523,552 1550,567 1603,582 1623,589 1640,589 1640,850 600,850 600,605",
);

const SHADOWS: number[][] = [
  [1593, 135, 20, 8], [1480, 134, 6, 6], [1476, 158, 9, 9], [1577, 187, 13, 12], [1548, 197, 9, 6], [1597, 204, 13, 12],
  [1547, 230, 13, 7], [1607, 228, 9, 7], [1552, 250, 6, 4], [1518, 224, 5, 7], [1611, 246, 7, 5], [1592, 265, 11, 7],
  [1572, 280, 6, 6], [1609, 260, 6, 6], [1528, 317, 6, 8], [1583, 315, 15, 5], [1607, 305, 6, 6], [1570, 357, 11, 6],
  [1599, 357, 8, 9], [1568, 404, 12, 5], [1520, 425, 14, 6], [1530, 413, 6, 4], [1615, 430, 14, 15], [1570, 448, 15, 12],
  [1590, 448, 8, 7], [1540, 462, 20, 10], [1507, 470, 8, 7], [1483, 476, 10, 6], [1617, 472, 12, 10], [1423, 513, 12, 13],
  [1400, 522, 10, 6], [1483, 483, 22, 14], [1443, 487, 9, 8], [1537, 478, 22, 8], [1567, 493, 15, 8], [1603, 483, 22, 12],
  [1553, 537, 10, 13], [1513, 540, 8, 8], [630, 395, 16, 20], [672, 402, 15, 18], [705, 398, 12, 14], [728, 398, 14, 16],
  [652, 432, 12, 10], [720, 422, 34, 14], [985, 372, 14, 6], [1014, 376, 9, 8], [955, 346, 5, 8], [1046, 350, 4, 4],
  [1070, 142, 18, 5], [1102, 345, 14, 4],
];

const RED: number[][] = [
  [787, 410, 6, 14], [771, 412, 6, 4], [792, 398, 12, 5], [820, 391, 8, 5], [833, 391, 4, 10], [846, 386, 4, 8], [861, 388, 5, 11],
  [885, 387, 5, 6], [941, 351, 6, 7], [736, 514, 8, 5], [744, 533, 5, 5], [743, 547, 5, 4], [757, 582, 3, 2], [826, 613, 8, 5],
  [832, 626, 10, 8], [822, 637, 10, 5], [803, 608, 3, 7], [859, 642, 7, 5], [850, 651, 3, 5], [878, 643, 12, 2], [903, 645, 2, 8],
  [856, 681, 2, 4], [975, 686, 10, 7], [988, 675, 9, 5], [965, 703, 6, 2], [1256, 714, 9, 8], [1270, 706, 7, 8], [1290, 651, 3, 6],
  [1282, 665, 5, 3], [1299, 628, 4, 3], [1268, 690, 2, 5], [1262, 681, 4, 2], [1105, 775, 9, 3], [1350, 597, 4, 2], [1213, 756, 4, 3],
];

const GREY_RAMP = "0.32 0.36 0.42 0.48 0.51 0.56 0.68 0.82 0.91 0.93 0.94";

function RasterMap() {
  return (
    <svg width="1014" height="708" viewBox="616 121 1014 708" className="block">
      <defs>
        <filter id="land" filterUnits="userSpaceOnUse" x="596" y="101" width="1054" height="748" colorInterpolationFilters="sRGB">
          <feTurbulence type="fractalNoise" baseFrequency="0.045" numOctaves="4" seed="4" result="warp" />
          <feGaussianBlur in="SourceGraphic" stdDeviation="1.2" result="soft" />
          <feDisplacementMap in="soft" in2="warp" scale="36" xChannelSelector="R" yChannelSelector="G" result="field" />
          <feTurbulence type="fractalNoise" baseFrequency="0.36" numOctaves="3" seed="9" />
          <feColorMatrix values="1 0 0 0 0 1 0 0 0 0 1 0 0 0 0 0 0 0 0 1" result="fine" />
          <feTurbulence type="fractalNoise" baseFrequency="0.05" numOctaves="4" seed="12" />
          <feColorMatrix values="1 0 0 0 0 1 0 0 0 0 1 0 0 0 0 0 0 0 0 1" result="swirl" />
          <feComposite in="field" in2="fine" operator="arithmetic" k2="1" k3="0.85" k4="-0.425" result="a" />
          <feComposite in="a" in2="swirl" operator="arithmetic" k2="1" k3="0.5" k4="-0.25" />
          <feComponentTransfer>
            <feFuncR type="table" tableValues={GREY_RAMP} />
            <feFuncG type="table" tableValues={GREY_RAMP} />
            <feFuncB type="table" tableValues={GREY_RAMP} />
          </feComponentTransfer>
        </filter>
        <filter id="sea" filterUnits="userSpaceOnUse" x="596" y="101" width="1054" height="748" colorInterpolationFilters="sRGB">
          <feTurbulence type="fractalNoise" baseFrequency="0.7" numOctaves="2" seed="2" />
          <feColorMatrix values="1 0 0 0 0 1 0 0 0 0 1 0 0 0 0 0 0 0 0 1" result="n" />
          <feComposite in="SourceGraphic" in2="n" operator="arithmetic" k2="1" k3="0.08" k4="-0.04" result="g" />
          <feComposite in="g" in2="SourceGraphic" operator="in" />
        </filter>
        <filter id="classes" filterUnits="userSpaceOnUse" x="596" y="101" width="1054" height="748" colorInterpolationFilters="sRGB">
          <feTurbulence type="fractalNoise" baseFrequency="0.08" numOctaves="3" seed="21" result="warp" />
          <feGaussianBlur in="SourceGraphic" stdDeviation="2" result="soft" />
          <feDisplacementMap in="soft" in2="warp" scale="18" xChannelSelector="R" yChannelSelector="G" result="field" />
          <feTurbulence type="fractalNoise" baseFrequency="0.1 0.08" numOctaves="4" seed="33" />
          <feColorMatrix values="1 0 0 0 0 1 0 0 0 0 1 0 0 0 0 0 0 0 0 1" result="mid" />
          <feTurbulence type="fractalNoise" baseFrequency="0.38" numOctaves="2" seed="6" />
          <feColorMatrix values="1 0 0 0 0 1 0 0 0 0 1 0 0 0 0 0 0 0 0 1" result="fine" />
          <feComposite in="field" in2="mid" operator="arithmetic" k2="1" k3="0.6" k4="-0.3" result="a" />
          <feComposite in="a" in2="fine" operator="arithmetic" k2="1" k3="0.75" k4="-0.375" />
          <feComponentTransfer>
            <feFuncR type="discrete" tableValues="0.86 0.86 0.91 0.91 0.91 0.91 0.91 0.91 0.91 0.91 0.91 0.56 0.16 0.16 0.16 0.16 0.16 0.16 0.16 0.16" />
            <feFuncG type="discrete" tableValues="0.10 0.10 0.96 0.96 0.96 0.96 0.96 0.96 0.96 0.96 0.96 0.95 0.94 0.94 0.94 0.94 0.51 0.51 0.51 0.51" />
            <feFuncB type="discrete" tableValues="0.10 0.10 0.07 0.07 0.07 0.07 0.07 0.07 0.07 0.07 0.07 0.17 0.28 0.28 0.28 0.28 0.04 0.04 0.04 0.04" />
          </feComponentTransfer>
        </filter>
        <filter id="edge" filterUnits="userSpaceOnUse" x="596" y="101" width="1054" height="748" colorInterpolationFilters="sRGB">
          <feTurbulence type="fractalNoise" baseFrequency="0.16" numOctaves="3" seed="8" result="w" />
          <feDisplacementMap in="SourceGraphic" in2="w" scale="8" xChannelSelector="R" yChannelSelector="G" />
        </filter>
        <filter id="blur5" filterUnits="userSpaceOnUse" x="596" y="101" width="1054" height="748">
          <feGaussianBlur stdDeviation="5" />
        </filter>
        <clipPath id="district">
          <polygon points={DISTRICT} />
        </clipPath>
        <clipPath id="water">
          <polygon points={SEA} />
        </clipPath>
      </defs>

      {/* vegetation index in grey */}
      <g filter="url(#land)">
        <rect x="590" y="95" width="1070" height="760" fill="#7d7d7d" />
        <Poly p="590,95 680,121 655,180 635,250 650,300 630,360 590,370" fill="#9c9c9c" />
        <Poly p="720,95 900,95 860,170 780,160" fill="#888" />
        <Poly p="930,95 1110,95 1200,240 1120,330 1060,390 1020,390 990,330 940,300 900,180" fill="#a6a6a6" />
        <Poly p="1100,95 1660,95 1660,480 1420,530 1320,520 1330,430 1400,330 1300,330 1240,250 1130,230" fill="#b4b4b4" />
        <Poly p="1330,440 1420,350 1560,400 1640,500 1640,580 1420,525 1380,580 1300,540" fill="#9a9a9a" />
        <Poly p="838,180 905,178 917,228 935,270 955,298 900,285 850,250 827,212" fill="#f0f0f0" />
        <Poly p="1000,265 1120,255 1165,288 1130,335 1080,350 1065,385 1025,372 1018,310" fill="#f0f0f0" />
        <Poly p="960,300 1000,280 1000,320 965,330" fill="#e5e5e5" />
        <Poly p="920,190 960,185 1000,235 1000,270 960,250 925,230" fill="#c2c2c2" />
        <Poly p="815,325 860,305 900,325 905,348 830,360" fill="#c8c8c8" />
        <Poly p="950,121 1040,121 1020,145 975,135" fill="#d2d2d2" />
        <Poly p="1060,150 1130,130 1130,180 1090,200" fill="#d8d8d8" />
        <Poly p="1130,240 1250,245 1300,300 1230,350 1120,360" fill="#9c9c9c" />
        <Poly p="1040,400 1130,340 1270,360 1250,440 1220,510 1140,565 1040,530" fill="#7c7c7c" />
        <Poly p="590,470 720,480 720,560 640,620 590,610" fill="#888" />
        <g opacity=".34" fill="none">
          {RIDGES.map((r, i) => (
            <path key={i} d={r.d} strokeWidth={r.w} stroke={r.c} />
          ))}
        </g>
        <Poly p="1170,165 1310,145 1375,155 1420,215 1425,275 1395,285 1340,262 1250,238 1195,240 1130,200" fill="#f6f6f6" />
        <Poly p="1425,110 1550,110 1535,160 1490,190 1515,250 1540,300 1490,325 1440,320 1425,285 1410,200" fill="#f4f4f4" />
        <Poly p="1290,270 1400,290 1370,320 1310,330" fill="#cdcdcd" />
        <Poly p="1430,340 1460,345 1462,415 1440,390" fill="#e2e2e2" />
        <Poly p="1410,305 1435,305 1432,350 1405,355" fill="#6a6a6a" />
        <g fill="#6a6a6a">
          <Poly p="1195,290 1235,240 1240,252 1205,300" />
          <Poly p="1230,385 1265,358 1262,372 1235,395" />
          <Poly p="1200,380 1225,374 1220,392 1198,397" />
          <Blob b={[1205, 138, 13, 8]} />
          <Blob b={[1180, 148, 14, 6]} />
          <Blob b={[1080, 218, 14, 5]} />
        </g>
        <Line p="M1375 142L1378 172L1405 192L1418 215L1422 250" w={4} c="#585858" />
        <Line p="M915 180L920 225L935 245" w={5} c="#6e6e6e" />
        <Line p="M985 160L1040 190L1100 225" w={5} c="#747474" />
        <Line p="M1010 205L1060 235L1090 262" w={5} c="#747474" />
        <Poly p="1375,110 1427,110 1427,150 1360,143" fill="#808080" />
        <Line p="M1320 122L1345 128L1362 141L1425 140" w={3} c="#222" />
        <g fill="#1c1c1c">
          {SHADOWS.map((b, i) => (
            <Blob key={i} b={b} />
          ))}
        </g>
        <Line p="M630 430L627 470L640 480L625 510" w={4} c="#000" />
        <Line p="M630 445L636 500" w={4} c="#000" />
        <Line p="M760 121L770 133L783 138L790 121" w={2} c="#000" />
      </g>
      <ellipse cx="1328" cy="200" rx="9" ry="12" fill="#8c8c8c" filter="url(#blur5)" />

      {/* sea */}
      <g filter="url(#edge)">
        <g filter="url(#sea)">
          <polygon points={SEA} fill="#5c5c5c" />
          <g clipPath="url(#water)">
            <g filter="url(#blur5)" opacity=".8">
              <polygon points={DISTRICT} fill="#2f2f2f" stroke="#3c3c3c" strokeWidth="8" />
              <Line p="M616 611L645 624L670 632L700 626" w={9} c="#2c2c2c" />
              <Line p="M660 600L647 583L682 553" w={9} c="#2c2c2c" />
              <Line p="M925 712L945 750L990 775L1060 795L1150 790" w={14} c="#3a3a3a" />
              <Line p="M1270 690L1295 675" w={9} c="#404040" />
              <Line p="M1385 575L1425 532L1490 554L1620 590" w={7} c="#444" />
            </g>
            <ellipse cx="1363" cy="615" rx="5" ry="5" fill="#4b4b4b" />
            <ellipse cx="740" cy="600" rx="4" ry="3" fill="#4f4f4f" />
          </g>
        </g>
        <polygon points="680,604 688,592 693,595 684,611" fill="#9c9c9c" />
        <circle cx="1489" cy="576" r="1.8" fill="#ddd" />
        <circle cx="1527" cy="575" r="1.8" fill="#ddd" />
      </g>

      {/* classified district */}
      <g filter="url(#edge)">
        <g clipPath="url(#district)">
          <g filter="url(#classes)">
            <rect x="590" y="95" width="1070" height="760" fill="#7a7a7a" />
            <Poly p="690,440 760,430 860,430 850,480 760,520 700,470" fill="#6c6c6c" />
            <g fill="#919191">
              <Poly p="760,345 800,355 850,362 960,345 965,400 900,370 800,380" />
              <Poly p="860,420 980,420 985,500 960,530 900,530 820,500" />
              <Poly p="740,520 900,490 900,600 820,600" opacity={0.45} />
              <Blob b={[875, 632, 22, 10]} />
              <Poly p="940,720 1040,700 1130,770 1100,785 990,770" opacity={0.8} />
              <Poly p="795,640 850,670 850,705 800,690" opacity={0.6} />
              <Poly p="1180,740 1220,730 1210,765 1170,782 1120,770" />
              <Poly p="1230,430 1300,400 1330,500 1260,520" />
              <Blob b={[795, 685, 12, 5]} />
            </g>
            <g fill="#adadad">
              <Poly p="792,358 848,362 846,376 800,376" />
              <Poly p="880,365 895,352 902,380 960,385 963,396 900,400" />
              <Poly p="868,415 900,380 932,412 975,440 960,500 900,525 870,480 850,450" />
              <Poly p="960,410 982,420 982,480 955,500 945,430" />
              <Poly p="1005,462 1024,448 1026,466 1000,478" />
              <Blob b={[1030, 642, 18, 5]} />
              <Line p="M1090 690L1100 720L1098 760" w={8} c="#adadad" />
            </g>
            <g fill="#fafafa">
              <Poly p="893,378 920,380 920,402 936,414 936,438 918,450 900,468 880,462 872,446 884,415" />
              <Poly p="868,358 892,352 892,382 876,382" fill="#d0d0d0" />
              <Poly p="890,378 925,376 940,386 900,394" fill="#d8d8d8" />
              <Blob b={[966, 505, 7, 9]} />
              <Blob b={[1017, 490, 3, 3]} />
              <Poly p="890,470 930,455 905,500 895,520" fill="#c4c4c4" />
            </g>
            <Line p="M950 440L925 475L905 490M900 475L880 500M935 445L900 480" w={4} c="#d8d8d8" />
            <Poly p="1236,474 1253,440 1260,418 1290,375 1317,342 1347,325 1385,315 1427,260 1412,330 1370,385 1350,420 1325,440 1322,505 1290,480 1250,470" fill="#a4a4a4" />
            <Poly p="1250,440 1275,395 1310,355 1322,390 1300,430 1260,470" fill="#8c8c8c" />
            <Poly p="1320,340 1390,325 1400,345 1350,360" fill="#c2c2c2" />
            <g fill="#fafafa">
              <Poly p="1408,290 1423,255 1430,270 1420,305 1402,298" />
              <Poly p="1380,338 1398,332 1396,352 1376,354" />
              <Blob b={[1362, 368, 10, 6]} fill="#d8d8d8" />
              <Blob b={[1285, 440, 14, 7]} fill="#c0c0c0" />
              <Blob b={[1308, 450, 9, 9]} fill="#c0c0c0" />
            </g>
            <Blob b={[1312, 498, 9, 12]} fill="#b4b4b4" />
            <Line p="M1089 555L1090 600" w={5} c="#a4a4a4" />
            <Line p="M1265 480L1268 540L1290 610" w={5} c="#a4a4a4" />
            <Line p="M1170 650L1182 680L1181 735" w={5} c="#a8a8a8" />
            <Line p="M1205 655L1218 700L1228 730" w={5} c="#a8a8a8" />
            <Line p="M1010 640L1050 645L1080 625" w={5} c="#a4a4a4" />
            <Line p="M1118 655L1150 615L1190 560" w={4} c="#a4a4a4" />
            <Line p="M1080 670L1102 690L1098 740L1090 770" w={5} c="#a8a8a8" />
            <Line p="M1195 610L1205 590" w={5} c="#a4a4a4" />
            <Line p="M1318 590L1335 612L1372 582" w={5} c="#a4a4a4" />
            <Line p="M850 560L825 585" w={8} c="#989898" />
            <Line p="M935 540L900 560" w={8} c="#989898" />
            <g fill="#5c5c5c">
              <Poly p="1040,720 1060,690 1080,720 1060,750 1020,760" />
              <Poly p="1110,660 1170,640 1175,760 1120,760" />
              <Poly p="1190,660 1240,650 1260,700 1225,735 1190,730" />
              <Poly p="1300,560 1350,560 1350,590 1310,600" fill="#6b6b6b" />
              <Poly p="1190,610 1280,600 1260,640 1200,640" />
              <Poly p="1080,600 1140,580 1120,640 1080,640" fill="#666" />
              <Poly p="770,430 850,400 860,440 800,460" />
            </g>
            <g fill="#000">
              {RED.map(([cx, cy, rx, ry], i) => (
                <Blob key={i} b={[cx, cy, rx + 2, ry + 2]} />
              ))}
            </g>
          </g>
        </g>
        <polygon points="808,616 816,617 823,625 819,633 811,634 807,624" fill="#4b4b4b" />
        <polygon points="868,693 874,694 879,694 876,698 871,697" fill="#9fe92a" />
      </g>
    </svg>
  );
}

export default function App() {
  return (
    <div className="flex h-[896px] w-[1761px] flex-col overflow-hidden bg-[#efefef]">
      <div className="h-[2px] flex-none bg-[#d6d6d6]" />
      <div className="h-px flex-none bg-[#fafafa]" />
      <MainBar />
      <EditBar />
      <div className="flex min-h-0 flex-1">
        <LayersPanel />
        <div className="min-w-0 flex-1 border-t-2 border-[#efefef] bg-white pl-[303px]">
          <RasterMap />
        </div>
      </div>
    </div>
  );
}
